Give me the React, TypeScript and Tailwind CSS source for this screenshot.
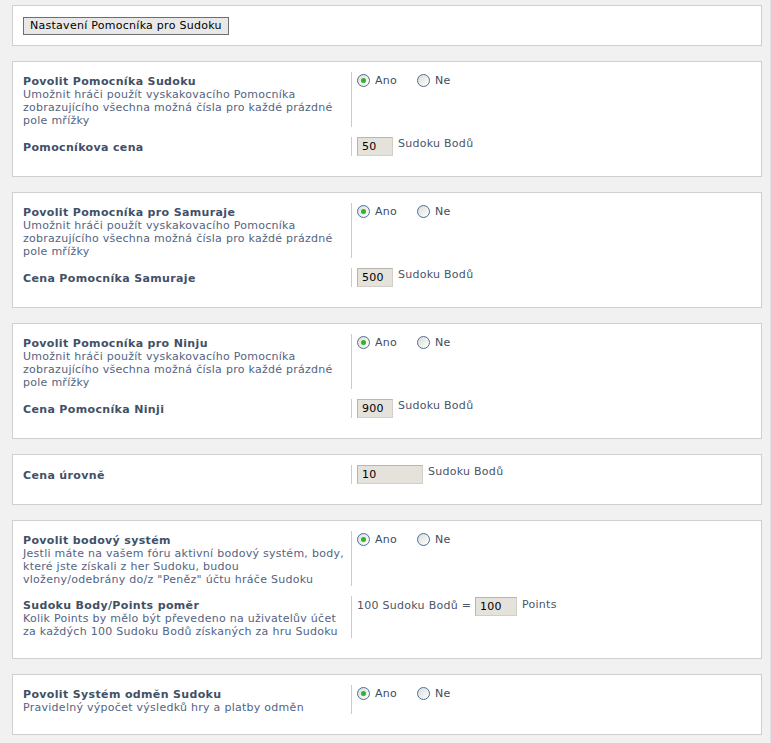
import React from "react";

type Row =
  | { kind: "radio"; title: string; desc?: string[] }
  | { kind: "input"; title: string; desc?: string[]; value: string; width: string; suffix: string }
  | { kind: "ratio"; title: string; desc?: string[] };

const sections: Row[][] = [
  [
    {
      kind: "radio",
      title: "Povolit Pomocníka Sudoku",
      desc: ["Umožnit hráči použít vyskakovacího Pomocníka", "zobrazujícího všechna možná čísla pro každé prázdné", "pole mřížky"],
    },
    { kind: "input", title: "Pomocníkova cena", value: "50", width: "w-[36px]", suffix: "Sudoku Bodů" },
  ],
  [
    {
      kind: "radio",
      title: "Povolit Pomocníka pro Samuraje",
      desc: ["Umožnit hráči použít vyskakovacího Pomocníka", "zobrazujícího všechna možná čísla pro každé prázdné", "pole mřížky"],
    },
    { kind: "input", title: "Cena Pomocníka Samuraje", value: "500", width: "w-[36px]", suffix: "Sudoku Bodů" },
  ],
  [
    {
      kind: "radio",
      title: "Povolit Pomocníka pro Ninju",
      desc: ["Umožnit hráči použít vyskakovacího Pomocníka", "zobrazujícího všechna možná čísla pro každé prázdné", "pole mřížky"],
    },
    { kind: "input", title: "Cena Pomocníka Ninji", value: "900", width: "w-[36px]", suffix: "Sudoku Bodů" },
  ],
  [{ kind: "input", title: "Cena úrovně", value: "10", width: "w-[66px]", suffix: "Sudoku Bodů" }],
  [
    {
      kind: "radio",
      title: "Povolit bodový systém",
      desc: [
        "Jestli máte na vašem fóru aktivní bodový systém, body,",
        "které jste získali z her Sudoku, budou",
        'vloženy/odebrány do/z "Peněz" účtu hráče Sudoku',
      ],
    },
    {
      kind: "ratio",
      title: "Sudoku Body/Points poměr",
      desc: ["Kolik Points by mělo být převedeno na uživatelův účet", "za každých 100 Sudoku Bodů získaných za hru Sudoku"],
    },
  ],
  [{ kind: "radio", title: "Povolit Systém odměn Sudoku", desc: ["Pravidelný výpočet výsledků hry a platby odměn"] }],
];

function Radio({ checked, label }: { checked?: boolean; label: string }) {
  return (
    <label className="flex items-center">
      <span className="w-[13px] h-[13px] rounded-full border border-[#4d6f93] bg-gradient-to-br from-[#dcdcd6] to-white flex items-center justify-center">
        {checked && <span className="w-[5px] h-[5px] rounded-full bg-[#2eb32e]" />}
      </span>
      <span className="ml-[5px] text-[#3d4b5f]">{label}</span>
    </label>
  );
}

function Field({ value, width }: { value: string; width: string }) {
  return (
    <span
      className={`${width} h-[19px] inline-flex items-center pl-[4px] bg-[#e5e2dc] border border-[#d2cfc8] border-t-[#b9b6b0] border-l-[#b9b6b0] text-black`}
    >
      {value}
    </span>
  );
}

function SettingRow({ row }: { row: Row }) {
  return (
    <div className="flex mb-[10px]">
      <div className={`w-[328px] shrink-0 ${row.kind === "input" ? "pt-[4px]" : "pt-[3px]"}`}>
        <div className="font-bold text-[#425067] tracking-[0.35px]">{row.title}</div>
        {row.desc?.map((d) => (
          <div key={d} className="text-[#536482]">
            {d}
          </div>
        ))}
      </div>
      <div className="border-l border-[#cbcbcb] pl-[5px] flex-1">
        {row.kind === "radio" && (
          <div className="flex items-center gap-[20px] pt-[2px]">
            <Radio checked label="Ano" />
            <Radio label="Ne" />
          </div>
        )}
        {row.kind === "input" && (
          <div className="flex items-start">
            <Field value={row.value} width={row.width} />
            <span className="ml-[5px] text-[#4a5566]">{row.suffix}</span>
          </div>
        )}
        {row.kind === "ratio" && (
          <div className="flex items-start pt-[1px]">
            <span className="text-[#4a5566] pt-[2px] whitespace-pre">100 Sudoku Bodů = </span>
            <Field value="100" width="w-[42px]" />
            <span className="ml-[5px] text-[#4a5566] pt-[1px]">Points</span>
          </div>
        )}
      </div>
    </div>
  );
}

export default function App() {
  return (
    <div
      className="min-h-[743px] bg-[#f1f1f1] pt-[5px] pl-[12px] pr-[8px] pb-[8px] text-[11px] leading-[13px] tracking-[0.27px] border-r border-[#e2e2e2]"
      style={{ fontFamily: '"DejaVu Sans", Verdana, sans-serif' }}
    >
      <div className="bg-white border border-[#cfcfcf] pt-[11px] pb-[10px] px-[10px]">
        <button className="h-[18px] px-[6px] bg-[#e8e8e8] border border-[#6e6e6e] text-black leading-[16px]">
          Nastavení Pomocníka pro Sudoku
        </button>
      </div>
      {sections.map((rows, i) => (
        <div key={i} className="mt-[15px] bg-white border border-[#cfcfcf] pt-[10px] pb-[10px] px-[10px]">
          {rows.map((r) => (
            <SettingRow key={r.title} row={r} />
          ))}
        </div>
      ))}
    </div>
  );
}
